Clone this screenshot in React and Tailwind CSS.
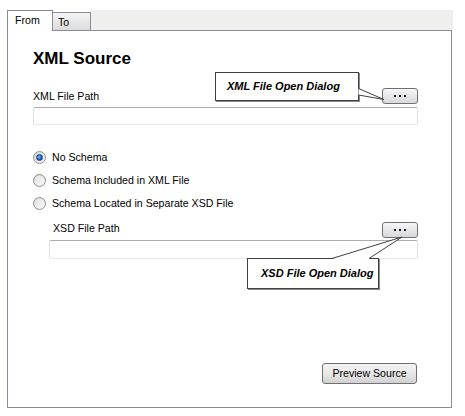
import React from "react";

function DotsButton() {
  return (
    <div className="flex h-[16px] w-[36px] items-center justify-center gap-[3px] rounded-[3px] border border-[#707070] bg-gradient-to-b from-[#f7f7f7] to-[#d8d8d8]">
      <span className="h-[2px] w-[2px] bg-[#141440]" />
      <span className="h-[2px] w-[2px] bg-[#141440]" />
      <span className="h-[2px] w-[2px] bg-[#141440]" />
    </div>
  );
}

function Radio({ checked, label }) {
  return (
    <div className="flex h-[16px] items-center gap-[6px]">
      <div className="flex h-[13px] w-[13px] items-center justify-center rounded-full border border-[#8e8f8f] bg-gradient-to-br from-[#d4d4d4] to-[#fbfbfb]">
        {checked ? (
          <div className="h-[7px] w-[7px] rounded-full border border-[#1d3f7a] bg-[radial-gradient(circle_at_40%_40%,#8fc3ff_0%,#2a6fd6_45%,#0f3c8c_100%)]" />
        ) : (
          <div className="h-[9px] w-[9px] rounded-full bg-gradient-to-br from-[#e4e4e4] to-[#f8f8f8]" />
        )}
      </div>
      <span className="text-[10.6px] leading-none text-black">{label}</span>
    </div>
  );
}

function TextBox({ h }) {
  return (
    <div
      className={`${h} w-full rounded-[2px] border border-t-[#abadb3] border-l-[#dbdfe6] border-r-[#dbdfe6] border-b-[#e3e9ef] bg-white`}
    />
  );
}

export default function App() {
  return (
    <div
      className="relative h-[416px] w-[465px] overflow-hidden bg-white pl-[7px] pt-[10px] text-black"
      style={{ fontFamily: '"Liberation Sans", Arial, sans-serif' }}
    >
      {/* Tab strip */}
      <div className="flex h-[20px] w-[446px] items-start">
        <div className="relative z-10 flex h-[21px] w-[46px] items-start justify-start border-l border-r border-t border-[#898c95] bg-white pl-[7px] pt-[4px] text-[10.6px] leading-none">
          From
        </div>
        <div className="mt-[2px] flex h-[18px] w-[38px] items-start border-r border-t border-[#898c95] bg-gradient-to-b from-[#f4f4f4] to-[#dcdcdc] pl-[5px] pt-[4px] text-[10.6px] leading-none">
          To
        </div>
        <div className="h-[20px] flex-1 bg-[#efefef]" />
      </div>

      {/* Panel */}
      <div className="flex h-[378px] w-[445px] flex-col border border-[#898c95] pl-[25px] pr-[33px] pt-[18px]">
        <div className="h-[20px] text-[17px] font-bold leading-[20px]">XML Source</div>

        <div className="mt-[19px] flex h-[16px] items-center justify-between">
          <span className="text-[10.6px] leading-none">XML File Path</span>
          <DotsButton />
        </div>
        <div className="mt-[3px]">
          <TextBox h="h-[18px]" />
        </div>

        <div className="mt-[24px] flex flex-col gap-[7px]">
          <Radio checked label="No Schema" />
          <Radio label="Schema Included in XML File" />
          <Radio label="Schema Located in Separate XSD File" />
        </div>

        <div className="ml-[16px] mt-[11px] flex flex-col">
          <div className="flex h-[16px] items-start justify-between">
            <span className="pl-[4px] pt-[1px] text-[10.6px] leading-none">XSD File Path</span>
            <DotsButton />
          </div>
          <div className="mt-[2px]">
            <TextBox h="h-[19px]" />
          </div>
        </div>

        <div className="mt-[104px] flex justify-end pr-[1px]">
          <div className="flex h-[21px] w-[95px] items-center justify-center rounded-[3px] border border-[#707070] bg-gradient-to-b from-[#f3f3f3] via-[#e8e8e8] to-[#d0d0d0] text-[10.6px] leading-none">
            Preview Source
          </div>
        </div>
      </div>

      {/* Callout 1 */}
      <div className="absolute left-[215px] top-[72px] flex h-[29px] w-[144px] items-center border border-[#404040] bg-white pl-[11px] shadow-[1px_1px_0_#8a8a8a] text-[11px] font-bold italic leading-none">
        XML File Open Dialog
      </div>
      {/* Callout 2 */}
      <div className="absolute left-[247px] top-[258px] flex h-[31px] w-[132px] items-center border border-[#404040] bg-white pl-[13px] shadow-[1px_1px_0_#8a8a8a] text-[11px] font-bold italic leading-none">
        XSD File Open Dialog
      </div>

      {/* Callout tails */}
      <svg className="pointer-events-none absolute left-0 top-0" width="465" height="416" viewBox="0 0 465 416">
        <polygon points="358.5,88.5 384,99.5 358.5,95" fill="#ffffff" />
        <polyline points="358.5,88.5 384,99.5 358.5,95" fill="none" stroke="#404040" strokeWidth="1" />
        <polygon points="332,259 402,237 369,259" fill="#ffffff" />
        <polyline points="332,258.5 402,237 369,258.5" fill="none" stroke="#404040" strokeWidth="1" />
      </svg>
    </div>
  );
}
